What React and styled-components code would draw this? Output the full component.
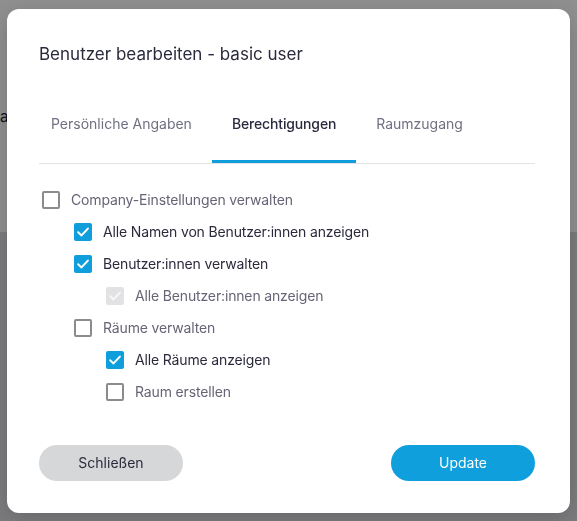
import { useState } from "react";
import styled, { createGlobalStyle } from "styled-components";

const Global = createGlobalStyle`
  html, body { margin: 0; padding: 0; height: 100%; }
  body {
    font-family: Inter, "Noto Sans", sans-serif;
    -webkit-font-smoothing: antialiased;
  }
  #root { height: 100%; }
`;

// page behind the dialog
const Page = styled.div`
  height: 100%;
  display: flex;
  flex-direction: column;
`;

const PageTop = styled.div`
  height: 232px;
  background: #ffffff;
  display: flex;
  align-items: center;
  font-size: 15px;
  color: #1f1f2e;
`;

const PageBottom = styled.div`
  flex: 1;
  background: #dcdde0;
`;

const Overlay = styled.div`
  position: fixed;
  inset: 0;
  background: rgba(0, 0, 0, 0.44);
  display: flex;
  align-items: center;
  justify-content: center;
`;

const Dialog = styled.div`
  width: 563px;
  height: 504px;
  box-sizing: border-box;
  background: #fff;
  border-radius: 12px;
  box-shadow: 0 6px 24px rgba(0, 0, 0, 0.18);
  padding: 33px 35px 32px 32px;
  display: flex;
  flex-direction: column;
`;

const Title = styled.h2`
  margin: 0;
  font-size: 17px;
  line-height: 24px;
  font-weight: 400;
  color: #2a2a3d;
`;

const TabBar = styled.div`
  margin-top: 35px;
  border-bottom: 1px solid #e3e3e6;
`;

const TabList = styled.div`
  display: flex;
  margin-left: -8px;
`;

const Tab = styled.button`
  position: relative;
  height: 62px;
  padding: 13px 20px 0;
  border: 0;
  background: none;
  font-family: inherit;
  font-size: 14px;
  line-height: 20px;
  display: flex;
  align-items: flex-start;
  color: ${(p) => (p.$active ? "#2a2a3d" : "#707082")};
  font-weight: ${(p) => (p.$active ? 500 : 400)};
  letter-spacing: ${(p) => (p.$active ? "-0.15px" : "0")};
  cursor: pointer;

  &::after {
    content: "";
    position: absolute;
    left: 0;
    right: 0;
    bottom: 0;
    height: 3px;
    background: ${(p) => (p.$active ? "#0e9edb" : "transparent")};
  }
`;

const List = styled.div`
  margin-top: 20px;
  display: flex;
  flex-direction: column;
`;

const Row = styled.label`
  height: 32px;
  display: flex;
  align-items: center;
  gap: 11px;
  padding-left: ${(p) => 3 + p.$level * 32}px;
  font-size: 14px;
  letter-spacing: -0.15px;
  color: ${(p) => (p.$checked && !p.$disabled ? "#2a2a3d" : "#656577")};
  cursor: ${(p) => (p.$disabled ? "default" : "pointer")};
`;

const Box = styled.span`
  width: 18px;
  height: 18px;
  box-sizing: border-box;
  border-radius: 2px;
  flex-shrink: 0;
  display: flex;
  align-items: center;
  justify-content: center;
  background: ${(p) => (p.$disabled ? "#e2e2e4" : p.$checked ? "#0e9edb" : "#fff")};
  border: ${(p) => (p.$checked || p.$disabled ? "0" : "2px solid #8c8c90")};
`;

const Footer = styled.div`
  margin-top: auto;
  display: flex;
  justify-content: space-between;
`;

const Button = styled.button`
  width: 144px;
  height: 36px;
  border: 0;
  border-radius: 18px;
  font-family: inherit;
  font-size: 14px;
  cursor: pointer;
  background: ${(p) => (p.$primary ? "#0f9fdc" : "#d6d7d9")};
  color: ${(p) => (p.$primary ? "#ffffff" : "#2a2a3d")};
`;

const Check = ({ color }) => (
  <svg width="14" height="14" viewBox="0 0 14 14" fill="none">
    <path d="M2.2 7.3 L5.5 10.4 L11.9 3.6" stroke={color} strokeWidth="2" strokeLinecap="round" strokeLinejoin="round" />
  </svg>
);

const initial = [
  { id: "company", label: "Company-Einstellungen verwalten", level: 0, checked: false },
  { id: "names", label: "Alle Namen von Benutzer:innen anzeigen", level: 1, checked: true },
  { id: "users", label: "Benutzer:innen verwalten", level: 1, checked: true },
  { id: "usersView", label: "Alle Benutzer:innen anzeigen", level: 2, checked: true, disabled: true },
  { id: "rooms", label: "Räume verwalten", level: 1, checked: false },
  { id: "roomsView", label: "Alle Räume anzeigen", level: 2, checked: true },
  { id: "roomCreate", label: "Raum erstellen", level: 2, checked: false },
];

const tabs = ["Persönliche Angaben", "Berechtigungen", "Raumzugang"];

export default function App() {
  const [perms, setPerms] = useState(initial);
  const [tab, setTab] = useState(1);

  const toggle = (id) =>
    setPerms(perms.map((p) => (p.id === id && !p.disabled ? { ...p, checked: !p.checked } : p)));

  return (
    <>
      <Global />
      <Page>
        <PageTop>
          <span>a</span>
        </PageTop>
        <PageBottom />
      </Page>
      <Overlay>
        <Dialog>
          <Title>Benutzer bearbeiten - basic user</Title>
          <TabBar>
            <TabList>
              {tabs.map((t, i) => (
                <Tab key={t} $active={i === tab} onClick={() => setTab(i)}>
                  {t}
                </Tab>
              ))}
            </TabList>
          </TabBar>
          <List>
            {perms.map((p) => (
              <Row
                key={p.id}
                $level={p.level}
                $checked={p.checked}
                $disabled={p.disabled}
                onClick={() => toggle(p.id)}
              >
                <Box $checked={p.checked} $disabled={p.disabled}>
                  {p.checked && <Check color={p.disabled ? "#f7f7f8" : "#fff"} />}
                </Box>
                {p.label}
              </Row>
            ))}
          </List>
          <Footer>
            <Button>Schließen</Button>
            <Button $primary>Update</Button>
          </Footer>
        </Dialog>
      </Overlay>
    </>
  );
}
